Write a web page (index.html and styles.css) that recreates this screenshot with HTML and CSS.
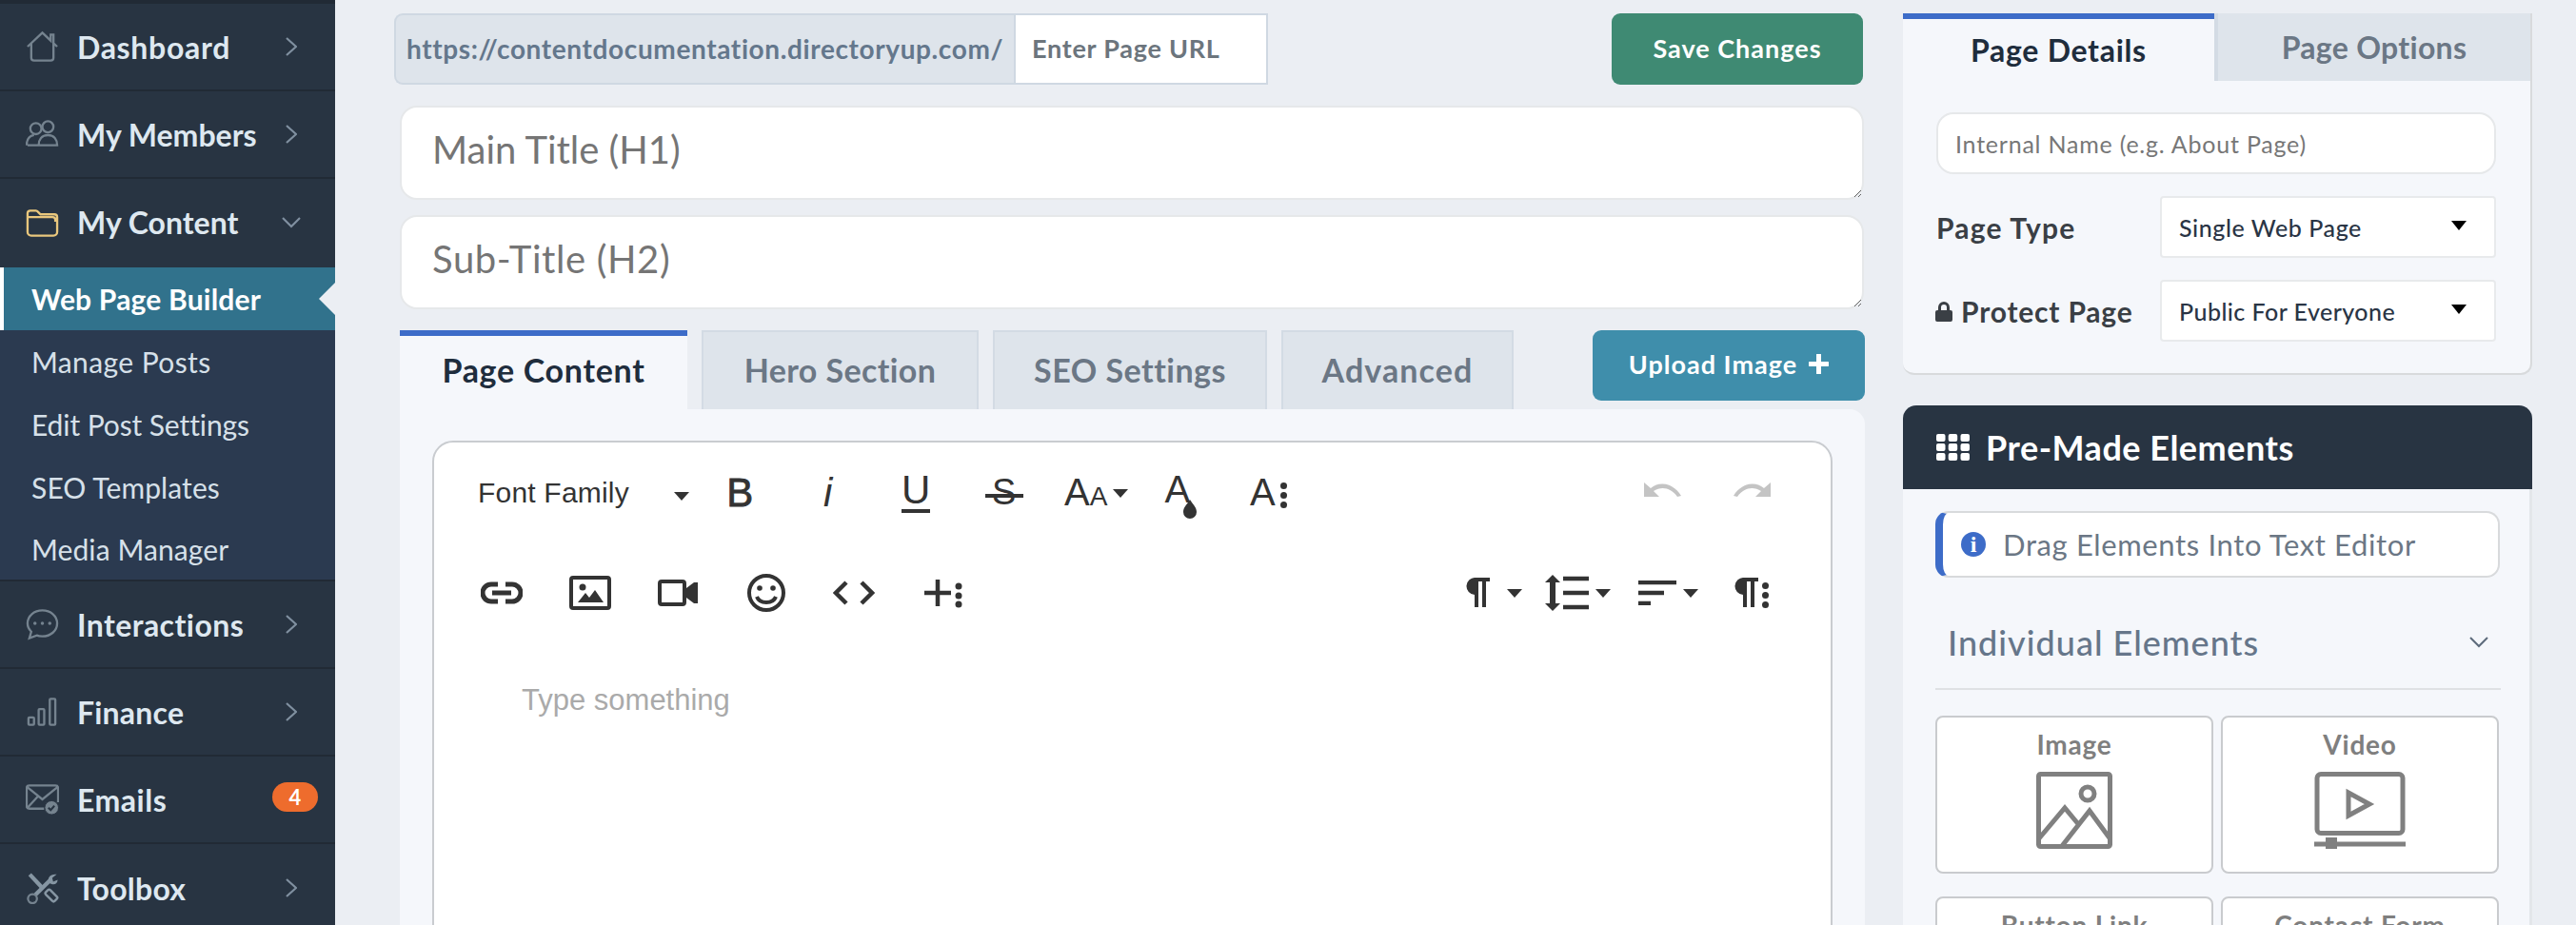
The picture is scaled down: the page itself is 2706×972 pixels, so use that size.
FILE: index.html
```html
<!DOCTYPE html>
<html lang="en">
<head>
<meta charset="utf-8">
<title>Web Page Builder</title>
<link rel="stylesheet" href="styles.css">
</head>
<body>
<aside class="sidebar">
  <a class="nav-item"><svg class="nav-icon" viewBox="0 0 36 34"><path d="M2 17 18 2l9 8.500V4h3v9.300L34 17M6 14v15a3 3 0 0 0 3 3h18a3 3 0 0 0 3-3V14"/></svg><span class="nav-text t-dash">Dashboard</span><svg class="chev" viewBox="0 0 12 20"><path d="m1 1 10 9-10 9"/></svg></a>
  <a class="nav-item"><svg class="nav-icon" viewBox="0 0 36 30"><circle cx="11" cy="9" r="6"/><circle cx="24" cy="7" r="6"/><path d="M1 27c0-6 3-10 8-11M2 27h11M14 27c0-6 3-11 10-11s10 5 10 11z"/></svg><span class="nav-text t-memb">My Members</span><svg class="chev" viewBox="0 0 12 20"><path d="m1 1 10 9-10 9"/></svg></a>
  <a class="nav-item nav-open"><svg class="nav-icon folder" viewBox="0 0 36 30"><path d="M2 8V5a3 3 0 0 1 3-3h6a3 3 0 0 1 2 1l3 3h15a3 3 0 0 1 3 3v2M2 9h27a3 3 0 0 1 3 3l2-1v14a4 4 0 0 1-4 4H6a4 4 0 0 1-4-4z"/></svg><span class="nav-text t-cont">My Content</span><svg class="chev-down" viewBox="0 0 20 12"><path d="m1 1 9 9 9-9"/></svg></a>
  <div class="subnav">
    <a class="sub-item sub-active"><span class="t-wpb">Web Page Builder</span></a>
    <a class="sub-item"><span class="t-mp">Manage Posts</span></a>
    <a class="sub-item"><span class="t-eps">Edit Post Settings</span></a>
    <a class="sub-item"><span class="t-seo">SEO Templates</span></a>
    <a class="sub-item sub-last"><span class="t-mm">Media Manager</span></a>
  </div>
  <a class="nav-item"><svg class="nav-icon" viewBox="0 0 36 34"><path d="M18 2c9 0 16 6 16 14s-7 14-16 14c-2 0-4 0-6-1l-8 3 2-7C3 22 2 19 2 16 2 8 9 2 18 2z"/><circle class="dot" cx="10" cy="16" r="1.800"/><circle class="dot" cx="18" cy="16" r="1.800"/><circle class="dot" cx="26" cy="16" r="1.800"/></svg><span class="nav-text t-int">Interactions</span><svg class="chev" viewBox="0 0 12 20"><path d="m1 1 10 9-10 9"/></svg></a>
  <a class="nav-item"><svg class="nav-icon" viewBox="0 0 36 32"><rect x="3" y="22" width="6" height="8" rx="1"/><rect x="14" y="13" width="6" height="17" rx="1"/><rect x="26" y="2" width="6" height="28" rx="1"/></svg><span class="nav-text t-fin">Finance</span><svg class="chev" viewBox="0 0 12 20"><path d="m1 1 10 9-10 9"/></svg></a>
  <a class="nav-item"><svg class="nav-icon" viewBox="0 0 36 32"><path d="M20 26H4a3 3 0 0 1-3-3V4a3 3 0 0 1 3-3h28a3 3 0 0 1 3 3v15M2 3l16 13L34 3M2 25l11-12"/><circle class="fill" cx="28" cy="25" r="7.500"/><path class="knock" d="m24.500 25 2.500 2.500 4-4.500"/></svg><span class="nav-text t-em">Emails</span><span class="badge">4</span></a>
  <a class="nav-item nav-end"><svg class="nav-icon" viewBox="0 0 36 36"><path class="thick" d="M4 3l14 15"/><rect class="handle" x="21" y="23" width="14" height="7" rx="2" transform="rotate(45 28 26.500)"/><path class="thick" d="M10 26 26 10"/><path class="hook" d="M25 12c-2-5 2-10 9-9l-5 4 1 4 5-2c0 5-5 7-10 3z"/><circle cx="7" cy="30" r="5"/></svg><span class="nav-text t-tool">Toolbox</span><svg class="chev" viewBox="0 0 12 20"><path d="m1 1 10 9-10 9"/></svg></a>
</aside>

<main class="center">
  <div class="top-row">
    <div class="url-group"><span class="url-prefix">https://contentdocumentation.directoryup.com/</span><span class="url-input">Enter Page URL</span></div>
    <a class="btn btn-save"><span class="btn-text">Save Changes</span></a>
  </div>
  <textarea class="title-field title-h1" rows="1" placeholder="Main Title (H1)"></textarea>
  <textarea class="title-field title-h2" rows="1" placeholder="Sub-Title (H2)"></textarea>
  <div class="tab-row">
    <a class="tab tab-active tab-content">Page Content</a>
    <a class="tab tab-hero">Hero Section</a>
    <a class="tab tab-seo">SEO Settings</a>
    <a class="tab tab-adv">Advanced</a>
    <a class="btn btn-upload"><span class="btn-text">Upload Image</span><svg class="plus" viewBox="0 0 21 21"><path d="M10.500 1v19M1 10.500h19"/></svg></a>
  </div>
  <section class="panel">
    <div class="editor">
      <div class="tb-row">
        <div class="tb-font"><span>Font Family</span><i class="caret"></i></div>
        <span class="tb gl g-b">B</span>
        <span class="tb gl g-i">i</span>
        <span class="tb gl g-u"><span>U</span></span>
        <span class="tb gl g-s"><span>S</span></span>
        <span class="tb dd g-aa"><span class="big">A</span><span class="small">A</span><i class="caret"></i></span>
        <span class="tb g-drop"><span class="big">A</span><svg class="drop" viewBox="0 0 14 20"><path d="M7 0c3 5 7 8 7 13a7 7 0 0 1-14 0C0 8 4 5 7 0z"/></svg></span>
        <span class="tb g-more"><span class="big">A</span><span class="dots"><b></b><b></b><b></b></span></span>
        <span class="spacer"></span>
        <span class="tb"><svg class="ic-undo" viewBox="0 0 40 16"><path d="M0 0v15h16l-6-6c8-5 18-4 25 6l4-1C31 1 17-2 7 6z"/></svg></span>
        <span class="tb"><svg class="ic-undo" viewBox="0 0 40 16"><path d="M40 0v15H24l6-6c-8-5-18-4-25 6l-4-1C9 1 23-2 33 6z"/></svg></span>
      </div>
      <div class="tb-row">
        <span class="tb"><svg class="ic-link" viewBox="0 0 44 24"><path d="M18 3h-7a9 9 0 0 0 0 18h7M26 3h7a9 9 0 0 1 0 18h-7M12 12h20"/></svg></span>
        <span class="tb"><svg class="ic-img" viewBox="0 0 44 36"><rect x="2" y="2" width="40" height="32" rx="2"/><circle class="solid" cx="14" cy="12" r="3.500"/><path class="solid" d="M9 28l8-10 4 5 6-8 9 13z"/></svg></span>
        <span class="tb"><svg class="ic-vid" viewBox="0 0 42 28"><rect x="2" y="2" width="26" height="24" rx="2"/><path class="solid" d="M30 9l8-6h4v22h-4l-8-6z"/></svg></span>
        <span class="tb"><svg class="ic-smile" viewBox="0 0 40 40"><circle cx="20" cy="20" r="18"/><circle class="solid" cx="13" cy="15" r="2.800"/><circle class="solid" cx="27" cy="15" r="2.800"/><path d="M10 24c3 8 17 8 20 0"/></svg></span>
        <span class="tb"><svg class="ic-code" viewBox="0 0 44 26"><path d="M14 2 3 13l11 11M30 2l11 11-11 11"/></svg></span>
        <span class="tb"><svg class="ic-plus" viewBox="0 0 42 32"><path d="M16 2v28M2 16h28"/><circle class="solid" cx="38" cy="9" r="3.500"/><circle class="solid" cx="38" cy="19" r="3.500"/><circle class="solid" cx="38" cy="28" r="3.500"/></svg></span>
        <span class="spacer"></span>
        <span class="tb dd g-para"><svg class="ic-pil" viewBox="0 0 26 31"><path class="solid" d="M11 0H26V4H22V31H18V4H14V31H10V18A9 9 0 0 1 11 0Z"/></svg><i class="caret"></i></span>
        <span class="tb dd g-lh"><svg class="ic-lh" viewBox="0 0 46 38"><path class="solid" d="M8 0l8 8h-5v22h5l-8 8-8-8h5V8H0z"/><path class="bar" d="M19 4h27M19 19h27M19 34h27"/></svg><i class="caret"></i></span>
        <span class="tb dd"><svg class="ic-al" viewBox="0 0 40 26"><path class="bar" d="M0 2h40M0 13h27M0 24h13"/></svg><i class="caret"></i></span>
        <span class="tb g-parm"><svg class="ic-pil" viewBox="0 0 26 31"><path class="solid" d="M11 0H26V4H22V31H18V4H14V31H10V18A9 9 0 0 1 11 0Z"/></svg><span class="dots"><b></b><b></b><b></b></span></span>
      </div>
      <div class="editor-body">Type something</div>
    </div>
  </section>
</main>

<aside class="right">
  <section class="card">
    <div class="card-tabs"><a class="ctab ctab-active">Page Details</a><a class="ctab ctab-off">Page Options</a></div>
    <div class="card-body">
      <input class="name-input" type="text" placeholder="Internal Name (e.g. About Page)">
      <div class="field"><label class="field-label l-type">Page Type</label><div class="select"><span class="s-single">Single Web Page</span><i class="s-caret"></i></div></div>
      <div class="field"><label class="field-label l-prot"><svg class="lock" viewBox="0 0 18 22"><path d="M3 10V7a6 6 0 0 1 12 0v3h1a2 2 0 0 1 2 2v8a2 2 0 0 1-2 2H2a2 2 0 0 1-2-2v-8a2 2 0 0 1 2-2zm3 0h6V7a3 3 0 0 0-6 0z"/></svg>Protect Page</label><div class="select"><span class="s-public">Public For Everyone</span><i class="s-caret"></i></div></div>
    </div>
  </section>
  <section class="elements">
    <h2 class="el-head"><svg class="grid-ic" viewBox="0 0 35 28"><rect width="9.500" height="8" rx="2"/><rect x="12.700" width="9.500" height="8" rx="2"/><rect x="25.500" width="9.500" height="8" rx="2"/><rect y="10" width="9.500" height="8" rx="2"/><rect x="12.700" y="10" width="9.500" height="8" rx="2"/><rect x="25.500" y="10" width="9.500" height="8" rx="2"/><rect y="20" width="9.500" height="8" rx="2"/><rect x="12.700" y="20" width="9.500" height="8" rx="2"/><rect x="25.500" y="20" width="9.500" height="8" rx="2"/></svg><span>Pre-Made Elements</span></h2>
    <div class="el-body">
      <div class="alert"><span class="info">i</span><span class="alert-text">Drag Elements Into Text Editor</span></div>
      <div class="acc"><span class="acc-text">Individual Elements</span><svg class="acc-chev" viewBox="0 0 20 12"><path d="m1 1 9 9 9-9"/></svg></div>
      <div class="tiles">
        <div class="tile"><span class="tile-label">Image</span><svg class="tile-ic ti-image" viewBox="0 0 80 81"><rect x="2.500" y="2.500" width="75" height="76" rx="2"/><circle cx="54" cy="23" r="7"/><path d="M3 70 30 38l15 18M27 78l29-37 22 30"/></svg></div>
        <div class="tile"><span class="tile-label">Video</span><svg class="tile-ic ti-video" viewBox="0 0 96 81"><rect x="3" y="2.500" width="90" height="62" rx="4"/><path d="M36 22v24l22-12z"/><path d="M0 76h96"/><rect class="solid" x="12" y="69" width="12" height="12"/></svg></div>
        <div class="tile"><span class="tile-label">Button Link</span></div>
        <div class="tile"><span class="tile-label">Contact Form</span></div>
      </div>
    </div>
  </section>
</aside>
</body>
</html>
```
FILE: styles.css
```css
* { box-sizing: border-box; }
html, body { margin: 0; padding: 0; height: 972px; overflow: hidden; }
body {
  display: grid;
  grid-template-columns: 352px 1607px 747px;
  background: #ebeef3;
  font-family: Lato, "Liberation Sans", sans-serif;
  color: #2a3545;
}
a { display: block; }

/* Sidebar */
.sidebar { background: #283442; border-top: 4px solid #212a35; height: 972px; overflow: hidden; }
.nav-item {
  display: flex; align-items: center; height: 92px; padding: 0 40px 0 27px;
  border-bottom: 2px solid #212a35;
}
.nav-open { border-bottom: 0; height: 93px; padding-bottom: 2px; }
.nav-end { border-bottom: 0; }
.nav-icon { width: 35px; height: 34px; flex: none; margin-right: 19px; fill: none; stroke: #75838f; stroke-width: 2.400; }
.nav-icon .dot { fill: #75838f; stroke: none; }
.nav-icon .fill { fill: #75838f; stroke: #283442; stroke-width: 1; }
.nav-icon .knock { stroke: #283442; stroke-width: 2.200; }
.nav-icon .thick { stroke-width: 4.500; stroke: #8696a3; }
.nav-icon .hook { fill: #8696a3; stroke: none; }
.nav-icon .handle { stroke: #8696a3; stroke-width: 2.600; }
.folder { stroke: #e9c77d; }
.nav-text { font-size: 32px; font-weight: 700; color: #dee8f0; white-space: nowrap; }
.t-dash { letter-spacing: .7px; }
.t-int { letter-spacing: .45px; }
.t-fin { letter-spacing: .2px; }
.t-em { letter-spacing: .5px; }
.t-tool { letter-spacing: .25px; }
.chev { width: 12px; height: 20px; margin-left: auto; fill: none; stroke: #8090a0; stroke-width: 2.200; }
.chev-down { width: 20px; height: 12px; margin-left: auto; margin-right: -4px; fill: none; stroke: #8090a0; stroke-width: 2.200; }
.badge {
  margin-left: auto; margin-right: -22px; width: 48px; height: 31px; border-radius: 16px; background: #ee6c2d;
  color: #fff; font-size: 22px; font-weight: 700; text-align: center; line-height: 31px; margin-top: -6px;
}
.subnav { background: #2b3a50; }
.sub-item { height: 66px; padding-left: 33px; display: flex; align-items: center; font-size: 30px; color: #d6e0e9; white-space: nowrap; }
.sub-last { height: 66px; border-bottom: 2px solid #212a35; }
.sub-active {
  position: relative; background: #31728c; color: #fff; font-weight: 700;
  border-left: 4px solid #fff; padding-left: 29px;
}
.sub-active::after {
  content: ""; position: absolute; right: 0; top: 16px;
  border-style: solid; border-width: 17px 17px 17px 0; border-color: transparent #ebeef3 transparent transparent;
}
.t-wpb { letter-spacing: .2px; }
.t-mp { letter-spacing: .4px; }
.t-eps { letter-spacing: -.1px; }
.t-seo, .t-mm { letter-spacing: .1px; }

/* Center */
.center { margin-left: 62px; width: 1545px; padding-top: 14px; }
.top-row { display: flex; height: 75px; }
.url-group { display: flex; height: 75px; }
.url-prefix {
  width: 651px; background: #dee4eb; border: 2px solid #cfd8e2; border-right: 0; border-radius: 9px 0 0 9px;
  display: flex; align-items: center; padding: 0 0 2px 11px;
  font-size: 28px; font-weight: 700; letter-spacing: .62px; color: #64778c; white-space: nowrap;
}
.url-input {
  width: 267px; background: #fff; border: 2px solid #cfd8e2; display: flex; align-items: center; padding: 0 0 2px 17px;
  font-size: 27px; font-weight: 700; letter-spacing: .75px; color: #6c757d; white-space: nowrap;
}
.btn { border-radius: 9px; color: #fff; font-size: 27px; font-weight: 700; letter-spacing: 1px; display: flex; align-items: center; justify-content: center; white-space: nowrap; }
.btn-text { margin-top: -3px; }
.btn-save { margin-left: auto; margin-right: 2px; width: 264px; background: #3f8a73; }
.title-field {
  display: block; width: 1538px; margin-left: 6px; height: 99px; background: #fff; border: 2px solid #e6e8ea; border-radius: 18px;
  padding: 20px 32px; font-family: inherit; font-size: 40px; line-height: 1.2; color: #222; resize: vertical; outline: none;
}
.title-field::placeholder { color: #757575; opacity: 1; }
.title-h1 { margin-top: 22px; }
.title-h2 { margin-top: 16px; letter-spacing: .6px; }
.tab-row { display: flex; height: 83px; margin-top: 22px; margin-left: 6px; gap: 15px; align-items: flex-start; }
.tab {
  height: 83px; background: #dee4eb; border: 2px solid #d3dbe4; border-bottom: 0; padding-bottom: 2px;
  font-size: 34px; font-weight: 700; letter-spacing: .6px; color: #6b7785; display: flex; align-items: center; justify-content: center; white-space: nowrap;
}
.tab-active { background: #f5f7fb; border: 0; border-top: 6px solid #3d6cc8; color: #1f2d3d; letter-spacing: .7px; padding-bottom: 6px; }
.tab-content { width: 302px; }
.tab-hero { width: 291px; letter-spacing: .4px; }
.tab-seo { width: 288px; letter-spacing: .5px; }
.tab-adv { width: 244px; letter-spacing: 1.1px; }
.btn-upload { margin-left: auto; width: 286px; height: 74px; background: #3f8eab; gap: 12px; }
.plus { width: 21px; height: 21px; fill: none; stroke: #fff; stroke-width: 5; stroke-linecap: round; margin-top: -3px; }
.panel { margin-left: 6px; background: #f5f7fb; border-radius: 0 16px 0 0; padding: 33px 34px 0; height: 560px; }
.editor { background: #fff; border: 2px solid #c9ccd0; border-radius: 22px; height: 700px; padding-left: 25px; padding-right: 37px; color: #333; }
.tb-row { display: flex; height: 105px; align-items: center; }
.spacer { flex: 1; }
.tb { width: 92.500px; height: 60px; flex: none; display: flex; align-items: center; justify-content: center; position: relative; }
.tb svg { fill: none; stroke: #333; }
.tb svg .solid { fill: #333; stroke: none; }
.tb-font { width: 250px; padding-left: 21px; display: flex; align-items: center; font-family: "Liberation Sans", sans-serif; font-size: 30px; letter-spacing: .2px; color: #333; white-space: nowrap; position: relative; }
.caret { display: block; width: 0; height: 0; border-style: solid; border-width: 9px 8px 0; border-color: #333 transparent transparent; }
.tb-font .caret { position: absolute; left: 227px; top: 16px; }
.gl { font-family: "Liberation Sans", sans-serif; font-size: 42px; color: #333; }
.g-b { -webkit-text-stroke: .8px #333; }
.g-i { font-style: italic; font-family: "Liberation Sans", sans-serif; }
.g-u span { border-bottom: 4px solid #333; line-height: 38px; padding-bottom: 1px; }
.g-s span { font-size: 38px; }
.g-s::after { content: ""; position: absolute; left: 26px; right: 26px; top: 31px; height: 4px; background: #333; }
.dd { justify-content: flex-start; padding-left: 20px; }
.dd .caret { position: absolute; left: 67px; top: 26px; }
.g-aa { font-family: "Liberation Sans", sans-serif; color: #333; padding-left: 17px; }
.big { font-family: "Liberation Sans", sans-serif; font-size: 40px; color: #333; }
.small { font-family: "Liberation Sans", sans-serif; font-size: 28px; margin-top: 8px; }
.g-aa .caret { left: 68px; }
.g-drop .big { margin-right: 6px; margin-top: -6px; }
.drop { width: 14px; height: 20px; position: absolute; left: 49px; top: 37px; fill: #333 !important; stroke: none !important; }
.g-more .big { margin-right: 5px; }
.dots { display: flex; flex-direction: column; gap: 3px; margin-top: 6px; }
.dots b { display: block; width: 7px; height: 7px; border-radius: 50%; background: #333; }
.ic-undo { width: 40px; height: 16px; fill: #c4c4c4 !important; stroke: none !important; margin-top: -5px; }
.ic-link { width: 44px; height: 24px; stroke-width: 5; }
.ic-img { width: 44px; height: 36px; stroke-width: 4; }
.ic-vid { width: 42px; height: 28px; stroke-width: 4; }
.ic-smile { width: 40px; height: 40px; stroke-width: 4; }
.ic-code { width: 44px; height: 26px; stroke-width: 4.500; }
.ic-plus { width: 42px; height: 32px; stroke-width: 4.500; }
.ic-pil { width: 26px; height: 31px; }
.g-para { padding-left: 23px; }
.g-lh { padding-left: 14px; }
.ic-lh { width: 46px; height: 38px; }
.bar { stroke-width: 4.500; }
.ic-al { width: 40px; height: 26px; }
.g-parm .ic-pil { margin-right: 4px; }
.editor-body { margin-top: 43px; padding-left: 67px; font-family: "Liberation Sans", sans-serif; font-size: 31px; color: #aaa; }

/* Right column */
.right { margin-left: 40px; width: 661px; padding-top: 14px; }
.card { height: 380px; background: #f5f7fb; border: 2px solid #d8dadc; border-top: 0; border-left: 0; border-radius: 0 0 12px 12px; }
.card-tabs { display: flex; height: 71px; }
.ctab { font-size: 32px; font-weight: 700; display: flex; align-items: center; justify-content: center; white-space: nowrap; }
.ctab-active { width: 327px; color: #1f2d3d; border-top: 6px solid #3d6cc8; letter-spacing: .7px; }
.ctab-off { width: 332px; background: #dee4eb; border-left: 4px solid #d3dbe4; color: #6b7785; letter-spacing: .3px; }
.card-body { padding: 33px 35px 0; }
.name-input {
  display: block; width: 588px; height: 65px; background: #fff; border: 2px solid #e6e8ea; border-radius: 18px; padding: 0 18px;
  font-family: inherit; font-size: 25px; letter-spacing: .78px; color: #222; outline: none;
}
.name-input::placeholder { color: #777; opacity: 1; }
.field { display: flex; align-items: center; margin-top: 23px; height: 65px; }
.field-label { width: 235px; font-size: 30px; font-weight: 700; color: #3a3f45; display: flex; align-items: center; white-space: nowrap; }
.l-type { letter-spacing: 1.2px; }
.l-prot { letter-spacing: .8px; }
.lock { width: 18px; height: 22px; margin-right: 9px; fill: #3a3f45; margin-left: -1px; }
.select {
  width: 353px; height: 65px; background: #fff; border: 2px solid #e8eaec; border-radius: 4px; padding: 0 29px 0 18px;
  display: flex; align-items: center; justify-content: space-between; font-size: 25px; font-weight: 500; color: #2a3545; white-space: nowrap;
}
.s-single { letter-spacing: .57px; }
.s-public { letter-spacing: .45px; }
.s-caret { display: block; border-style: solid; border-width: 10px 8.500px 0; border-color: #000 transparent transparent; margin-top: -4px; }
.elements { margin-top: 32px; }
.el-head {
  margin: 0; height: 88px; background: #283442; border-radius: 14px 14px 0 0; display: flex; align-items: center; padding-left: 35px; gap: 17px;
  font-size: 36px; font-weight: 700; letter-spacing: .5px; color: #fff;
}
.grid-ic { width: 35px; height: 28px; fill: #fff; flex: none; }
.el-body { background: #f5f7fb; border-right: 3px solid #e3e6ea; padding: 23px 34px 0; height: 460px; }
.alert {
  width: 593px; height: 70px; background: #fff; border: 2px solid #d8dadc; border-left: 8px solid #3d6cc8; border-radius: 14px;
  display: flex; align-items: center; padding-left: 19px; gap: 18px;
}
.info { width: 26px; height: 26px; border-radius: 50%; background: #3d6cc8; color: #fff; font-family: "Liberation Serif", serif; font-weight: 700; font-size: 24px; line-height: 26px; text-align: center; flex: none; }
.alert-text { font-size: 31px; letter-spacing: .63px; color: #6b7785; white-space: nowrap; }
.acc { width: 594px; height: 118px; padding: 19px 13px 0; border-bottom: 2px solid #dfe1e4; display: flex; align-items: center; justify-content: space-between; }
.acc-text { font-size: 36px; font-weight: 500; letter-spacing: 1px; color: #66768a; }
.acc-chev { width: 20px; height: 12px; fill: none; stroke: #5d6b7b; stroke-width: 2; }
.tiles { display: grid; grid-template-columns: 292px 292px; column-gap: 8px; row-gap: 24px; margin-top: 27px; }
.tile { height: 166px; background: #fff; border: 2px solid #c9cbce; border-radius: 8px; display: flex; flex-direction: column; align-items: center; padding-top: 12px; }
.tile-label { font-size: 28px; font-weight: 700; letter-spacing: .8px; color: #7f7f7f; line-height: 32px; white-space: nowrap; }
.tile-ic { margin-top: 13px; height: 81px; fill: none; stroke: #808080; stroke-width: 5; }
.ti-image { width: 80px; }
.ti-video { width: 96px; }
.ti-video .solid { fill: #808080; stroke: none; }
```
